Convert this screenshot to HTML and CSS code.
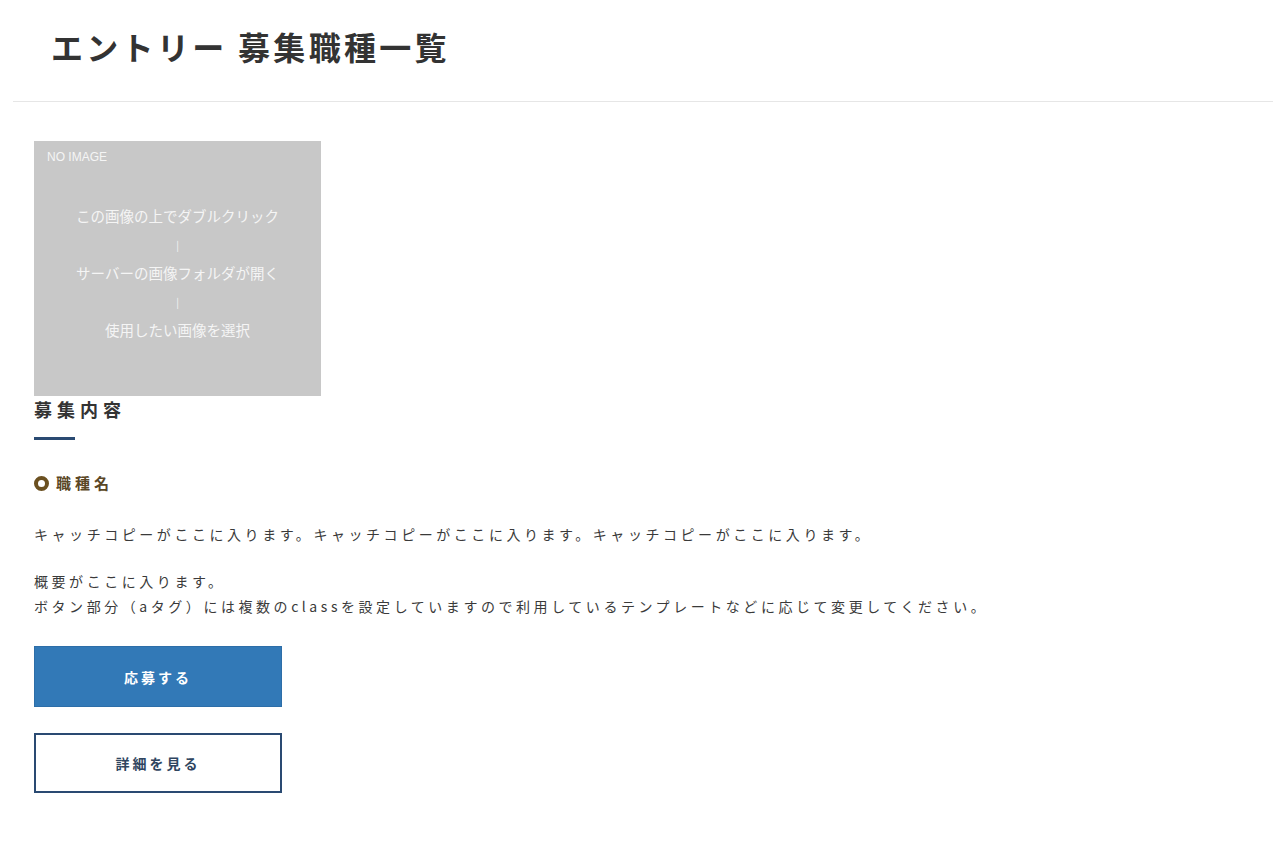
FILE: index.html
```html
<!DOCTYPE html>
<html lang="ja">
<head>
<meta charset="utf-8">
<title>エントリー 募集職種一覧</title>
<link rel="stylesheet" href="styles.css">
</head>
<body>
<header class="page-header">
  <h1 class="page-title">エントリー 募集職種一覧</h1>
</header>
<main class="content">
  <div class="noimage">
    <div class="noimage-label">NO IMAGE</div>
    <div class="noimage-text">
      <div>この画像の上でダブルクリック</div>
      <div class="bar">|</div>
      <div>サーバーの画像フォルダが開く</div>
      <div class="bar">|</div>
      <div>使用したい画像を選択</div>
    </div>
  </div>
  <h2 class="section-title">募集内容</h2>
  <h3 class="job-name"><span class="ring"></span>職種名</h3>
  <p class="text catch">キャッチコピーがここに入ります。キャッチコピーがここに入ります。キャッチコピーがここに入ります。</p>
  <p class="text summary">概要がここに入ります。<br>ボタン部分（aタグ）には複数のclassを設定していますので利用しているテンプレートなどに応じて変更してください。</p>
  <div class="buttons">
    <a class="btn btn-primary" href="#">応募する</a>
    <a class="btn btn-outline" href="#">詳細を見る</a>
  </div>
</main>
</body>
</html>
```

FILE: styles.css
```css
* { box-sizing: border-box; }
html, body { margin: 0; padding: 0; background: #fff; }
body {
  font-family: "Noto Sans CJK JP", "Noto Sans", sans-serif;
  color: #333;
}
.page-header {
  margin-left: 13px;
  padding: 22px 0 31px 38px;
  border-bottom: 1px solid #e6e6e6;
}
.page-title {
  margin: 0;
  font-size: 32px;
  line-height: 48px;
  font-weight: 700;
  letter-spacing: 3.3px;
  color: #333;
}
.content {
  padding: 39px 0 40px 34px;
}
.noimage {
  width: 287px;
  height: 255px;
  background: #c8c8c8;
  color: #f5f5f5;
  padding-top: 8px;
  display: flex;
  flex-direction: column;
}
.noimage-label {
  padding-left: 13px;
  font-family: "Liberation Sans", "Noto Sans CJK JP", sans-serif;
  font-size: 12px;
  line-height: 16px;
}
.noimage-text {
  margin-top: 37px;
  text-align: center;
  font-size: 14.5px;
  line-height: 28.5px;
}
.noimage-text .bar { font-size: 10px; }
.section-title {
  margin: 0;
  font-size: 18px;
  line-height: 26px;
  font-weight: 700;
  letter-spacing: 5px;
  color: #333;
}
.section-title::after {
  content: "";
  display: block;
  width: 41px;
  height: 3px;
  margin-top: 15px;
  background: #2a4a72;
}
.job-name {
  margin: 31px 0 0;
  display: flex;
  align-items: center;
  gap: 7px;
  font-size: 15px;
  line-height: 24px;
  font-weight: 700;
  letter-spacing: 4px;
  color: #5a4726;
}
.ring {
  width: 15px;
  height: 15px;
  border: 4px solid #6b5020;
  border-radius: 50%;
}
.text {
  margin: 0;
  font-size: 14px;
  line-height: 25px;
  letter-spacing: 3.55px;
  color: #3a3a3a;
}
.catch { margin-top: 27px; }
.summary { margin-top: 22px; }
.buttons {
  margin-top: 27px;
  display: flex;
  flex-direction: column;
  gap: 26px;
}
.btn {
  display: flex;
  align-items: center;
  justify-content: center;
  width: 248px;
  font-size: 14px;
  font-weight: 700;
  letter-spacing: 3px;
  text-decoration: none;
}
.btn-primary {
  height: 61px;
  background: #3279b7;
  border: 1px solid #2d6ea8;
  color: #fff;
}
.btn-outline {
  height: 60px;
  background: #fff;
  border: 2px solid #2a4a72;
  color: #2f4560;
}
```
